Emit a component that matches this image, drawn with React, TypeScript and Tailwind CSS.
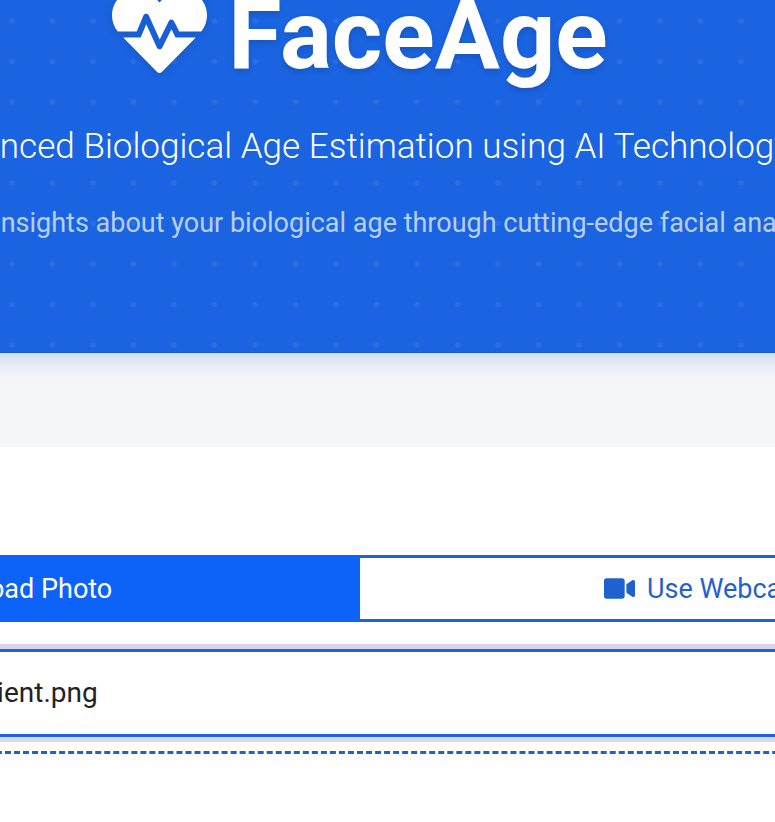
import React from 'react';
import { FaHeartbeat, FaUpload, FaVideo } from 'react-icons/fa';

const App: React.FC = () => {
    return (
        <div className="w-[775px] h-[822px] overflow-hidden bg-white font-['Roboto',sans-serif]">
            <div className="w-[1400px] -ml-[340px]">
                {/* Header */}
                <header className="relative z-10 h-[353px] overflow-hidden bg-[#1a64e1] border-b border-[#1858c4] bg-[radial-gradient(circle,rgba(255,255,255,0.07)_2px,transparent_3.5px)] bg-[size:40.5px_40.5px] bg-[position:7.75px_0.75px] shadow-[0_4px_24px_rgba(26,100,225,0.25)]">
                    <div className="-mt-[22px] flex flex-col items-center text-white">
                        <div className="flex items-center gap-[21px] whitespace-nowrap">
                            <FaHeartbeat className="mb-[8px] w-[95px] h-[95px] drop-shadow-[0_2px_4px_rgba(0,0,0,0.12)]" />
                            <h1 className="text-[97px] leading-[114px] font-bold [text-shadow:0_3px_6px_rgba(0,0,0,0.15)]">FaceAge</h1>
                        </div>
                        <h2 className="mt-[33px] pr-[6px] text-[35.1px] leading-[42px] font-light whitespace-nowrap">Advanced Biological Age Estimation using AI Technology</h2>
                        <p className="mt-[38px] pr-[6px] text-[27px] leading-[36px] text-white/70 whitespace-nowrap">Discover insights about your biological age through cutting-edge facial analysis</p>
                    </div>
                </header>

                {/* Gray band */}
                <div className="h-[94px] bg-[#f5f6f8]" />

                {/* Card */}
                <main className="h-[375px] bg-white px-5 pt-[108px]">
                    <div className="flex h-[67px] text-[27px]">
                        <button type="button" className="w-1/2 flex items-center justify-center gap-3 pr-[16px] bg-[#0d62f7] text-white">
                            <FaUpload className="w-[26px] h-[26px]" />
                            <span className="mt-[2px]">Upload Photo</span>
                        </button>
                        <button type="button" className="w-1/2 flex items-center justify-center gap-3 pl-[12px] bg-white border-[3px] border-l-0 border-[#1a64e1] text-[#1f62cf]">
                            <FaVideo className="w-[31px] h-[31px]" />
                            <span className="mt-[2px]">Use Webcam</span>
                        </button>
                    </div>

                    <div className="mt-[28px] h-[88px] -translate-y-px flex items-center pl-[277px] border-y-[3px] border-[#1a64e1] text-[28px] text-[#222] shadow-[0_-5px_0_#d9d6ee,0_5px_0_#d9d6ee]">
                        patient.png
                    </div>

                    <div className="mt-[13px] border-t-[3px] border-dashed border-[#1f62cf]" />
                </main>
            </div>
        </div>
    );
};

export default App;
